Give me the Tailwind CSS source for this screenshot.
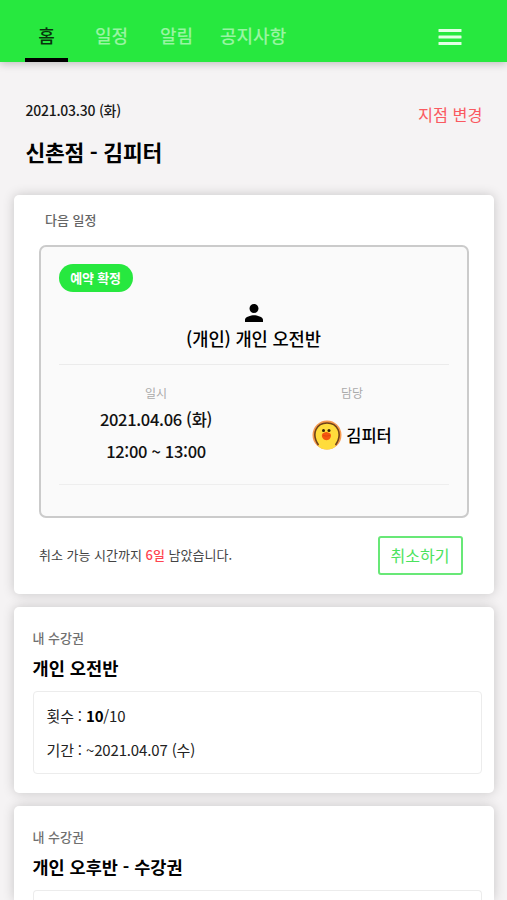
<!DOCTYPE html>
<html lang="ko">
<head>
<meta charset="utf-8">
<title>홈</title>
<script src="https://cdn.jsdelivr.net/npm/@tailwindcss/browser@4"></script>
</head>
<body class="bg-[#f5f3f4]">
<div class="flex h-[900px] flex-col overflow-hidden font-['Noto_Sans_CJK_KR',sans-serif] text-black whitespace-nowrap">
<header class="relative z-10 flex h-[62px] shrink-0 items-end justify-between bg-[#27e83f] pl-[25px] pr-[45px] shadow-[0_2px_8px_rgba(0,0,0,0.22)]">
  <nav class="flex h-[42px] text-[18px] font-medium leading-[30px] text-[#98f5a2]">
    <a class="w-[43px] border-b-4 border-black text-center text-black/80">홈</a>
    <a class="ml-[27px] w-[34px]">일정</a>
    <a class="ml-[31px] w-[34px]">알림</a>
    <a class="ml-[26px]">공지사항</a>
  </nav>
  <svg class="mb-[16px] h-[18px] w-6" viewBox="0 0 24 18" fill="#e2ffe5"><rect x=".5" y="1" width="23" height="3" rx=".5"/><rect x=".5" y="7.5" width="23" height="3" rx=".5"/><rect x=".5" y="14" width="23" height="3" rx=".5"/></svg>
</header>
<section class="flex h-[133px] shrink-0 justify-between pl-[25.5px] pr-[24.500px] pt-[38px]">
  <div>
    <p class="text-[14px] font-medium leading-5 tracking-[-0.25px] text-[#181818]">2021.03.30 (화)</p>
    <h1 class="mt-[18px] text-[21.5px] font-bold leading-7 tracking-[-0.25px]">신촌점 - 김피터</h1>
  </div>
  <a class="mt-[4px] text-[16.3px] leading-5 text-[#fa5960]">지점 변경</a>
</section>
<main class="flex min-h-0 flex-1 flex-col gap-[13px] px-[13.5px]">
  <section class="h-[399px] shrink-0 rounded-[5px] bg-white px-[25px] pt-[15px] shadow-[0_0_12px_rgba(0,0,0,0.19)]">
    <h2 class="pl-[6.5px] text-[13px] font-medium leading-5 text-[#666]">다음 일정</h2>
    <div class="mt-[15px] h-[273px] rounded-[7px] border-2 border-[#cbcbcb] bg-[#fafafa] px-[18px] pt-[17px]">
      <span class="flex h-[28px] w-[74px] items-center justify-center rounded-full bg-[#27e83f] text-[13px] font-bold tracking-[-0.2px] text-white">예약 확정</span>
      <div class="flex flex-col items-center border-b border-[#ebebeb] pt-[12px] pb-[14px]">
        <svg class="h-[18px] w-[18px]" viewBox="4 4 16 16"><path d="M12 12c2.21 0 4-1.79 4-4s-1.79-4-4-4-4 1.79-4 4 1.79 4 4 4zm0 2c-2.67 0-8 1.34-8 4v2h16v-2c0-2.66-5.33-4-8-4z"/></svg>
        <p class="mt-[4px] text-[17.7px] font-medium leading-6 tracking-[-0.15px]">(개인) 개인 오전반</p>
      </div>
      <div class="grid h-[120px] grid-cols-2 border-b border-[#eee] pt-[18px] text-center text-[16.5px] font-medium">
        <div>
          <p class="text-[12px] font-normal leading-5 text-[#aaa]">일시</p>
          <p class="leading-8 tracking-[-0.32px] text-[#111]">2021.04.06 (화)<br>12:00 ~ 13:00</p>
        </div>
        <div class="pl-[2px]">
          <p class="text-[12px] font-normal leading-5 text-[#aaa]">담당</p>
          <div class="mt-[17px] flex items-center justify-center gap-[4px]">
            <svg class="h-[30px] w-[30px]" viewBox="0 0 30 30">
              <defs><clipPath id="avatar"><circle cx="15" cy="15" r="14.5"/></clipPath></defs>
              <g clip-path="url(#avatar)">
                <rect width="30" height="30" fill="#f69a50"/>
                <path d="M6.500 25C-1.500 13 5 3 15 3S31.500 13 23.500 25v7h-17z" fill="#ffdc3c"/>
                <path d="M6.500 25C-1.500 13 5 3 15 3S31.500 13 23.500 25" fill="none" stroke="#70431a" stroke-width="1.600"/>
              </g>
              <circle cx="11.500" cy="10.500" r="1.500" fill="#352006"/><circle cx="17" cy="10.500" r="1.500" fill="#352006"/>
              <path d="M14.300 12c1.500 0 2.200 1 4 1.500 1.200 1.500.7 3.500-.3 5-1.500 2.200-5.500 2.200-7 0-1.300-1.500-1.500-3.500-.5-5 1.800-.5 2.300-1.500 3.800-1.500z" fill="#f4570f"/>
              <path d="M11 15.500q3.500 1.200 7 0" fill="none" stroke="#d9430a" stroke-width=".7"/>
            </svg>
            <span class="leading-[30px]">김피터</span>
          </div>
        </div>
      </div>
    </div>
    <div class="flex items-center justify-between pt-[18px] pr-[6px]">
      <p class="pl-[.5px] pb-px text-[13px] leading-5 text-[#444]">취소 가능 시간까지 <b class="font-medium text-[#ff4450]">6일</b> 남았습니다.</p>
      <button class="h-[39px] w-[85px] rounded-[3px] border-2 border-[#68e877] pb-px text-[16px] text-[#4be35d]">취소하기</button>
    </div>
  </section>
  <section class="h-[186px] shrink-0 rounded-[5px] bg-white pl-[19px] pr-[12px] pt-[21px] shadow-[0_0_12px_rgba(0,0,0,0.19)]">
    <p class="text-[13px] font-medium leading-5 text-[#707070]">내 수강권</p>
    <h3 class="mt-[8px] text-[17.6px] font-bold leading-6">개인 오전반</h3>
    <div class="mt-[11px] h-[83px] rounded-[4px] border border-[#ececec] px-[13px] pt-[7px] text-[15px] leading-[34px] tracking-[-0.15px] text-[#222]">
      <p>횟수 : <b class="text-black">10</b>/10</p>
      <p>기간 : ~2021.04.07 (수)</p>
    </div>
  </section>
  <section class="min-h-0 flex-1 rounded-t-[5px] bg-white pl-[19px] pr-[12px] pt-[21px] shadow-[0_0_12px_rgba(0,0,0,0.19)]">
    <p class="text-[13px] font-medium leading-5 text-[#707070]">내 수강권</p>
    <h3 class="mt-[8px] text-[17.5px] font-bold leading-6">개인 오후반 - 수강권</h3>
    <div class="mt-[11px] h-[10px] rounded-t-[4px] border border-b-0 border-[#ececec]"></div>
  </section>
</main>
</div>
</body>
</html>
